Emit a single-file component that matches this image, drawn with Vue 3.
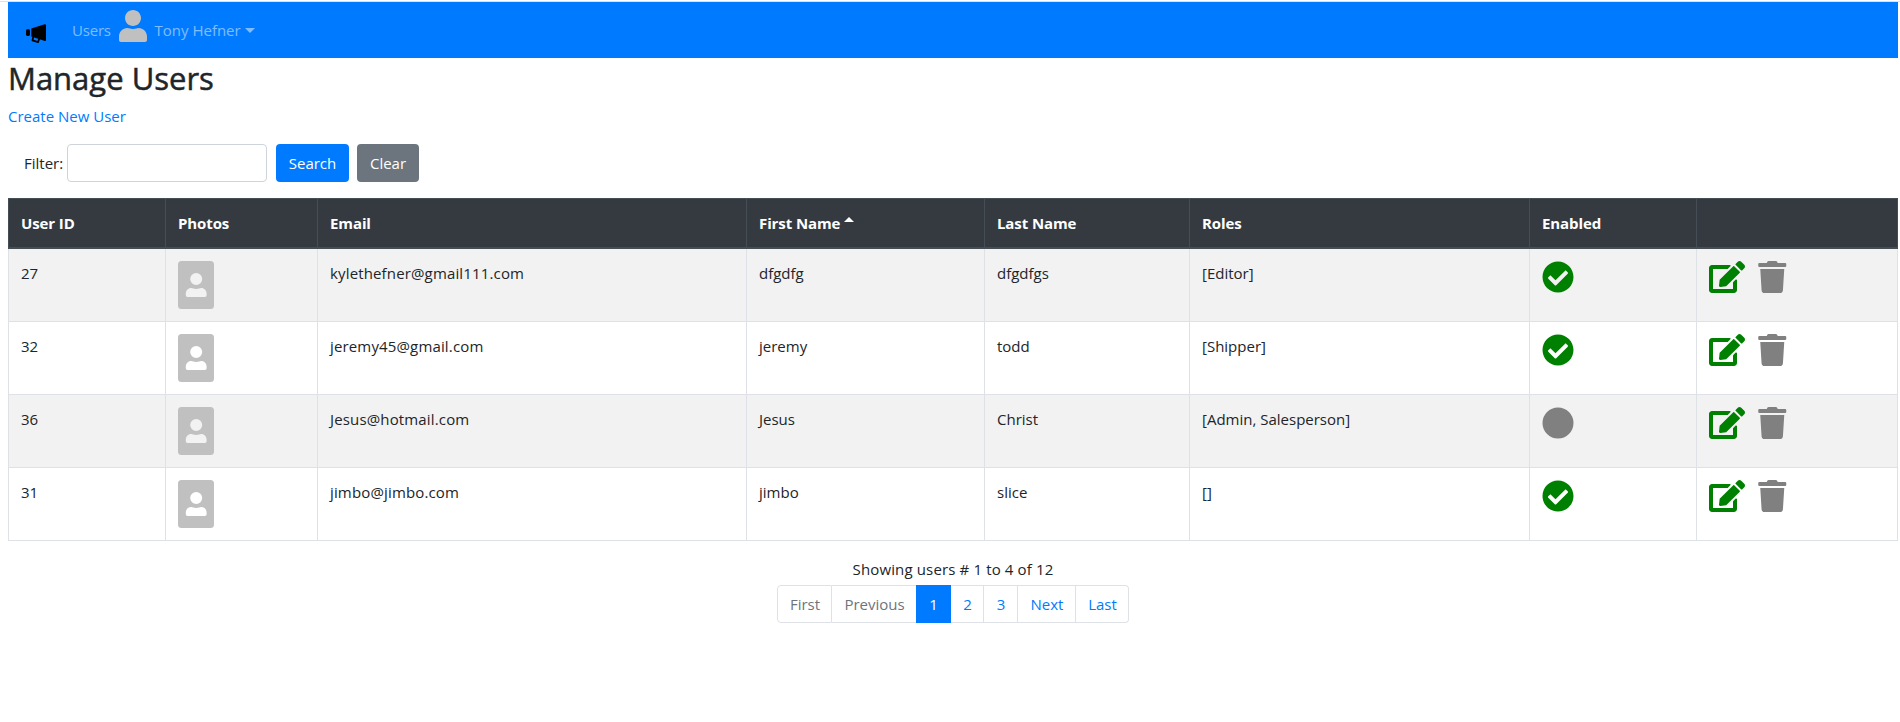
<script setup>
const columns = ['User ID', 'Photos', 'Email', 'First Name', 'Last Name', 'Roles', 'Enabled', '']
const users = [
  { id: 27, email: 'kylethefner@gmail111.com', first: 'dfgdfg', last: 'dfgdfgs', roles: '[Editor]', enabled: true },
  { id: 32, email: 'jeremy45@gmail.com', first: 'jeremy', last: 'todd', roles: '[Shipper]', enabled: true },
  { id: 36, email: 'Jesus@hotmail.com', first: 'Jesus', last: 'Christ', roles: '[Admin, Salesperson]', enabled: false },
  { id: 31, email: 'jimbo@jimbo.com', first: 'jimbo', last: 'slice', roles: '[]', enabled: true },
]
</script>

<template>
  <div class="page">
    <nav class="navbar">
      <svg class="brand" viewBox="0 0 20 20">
        <rect x="0" y="5.2" width="4" height="6.8" rx="1.4" />
        <path d="M5.3 4.4 L18.6 .2 Q20 0 20 1.2 V16 Q20 17.2 18.8 16.9 L5.3 12.6 Z" />
        <path class="handle" d="M7.2 13 L6.5 16.4 L12 18.2 L13.2 14.8" />
      </svg>
      <a class="nav-link users-link">Users</a>
      <svg class="avatar" viewBox="0 0 448 512">
        <path d="M224 256c70.700 0 128-57.300 128-128S294.700 0 224 0 96 57.300 96 128s57.300 128 128 128zm89.600 32c-28.700 0-42.500 16-89.600 16-47.100 0-60.800-16-89.600-16C60.200 288 0 348.200 0 422.400V480c0 18 14 32 32 32h384c18 0 32-14 32-32v-57.600c0-74.200-60.200-134.400-134.400-134.400z" />
      </svg>
      <a class="nav-link">Tony Hefner</a>
      <i class="caret"></i>
    </nav>

    <h2>Manage Users</h2>
    <a class="create">Create New User</a>

    <form class="filter" @submit.prevent>
      <label>Filter:</label>
      <input type="search" />
      <button class="btn search">Search</button>
      <button class="btn clear">Clear</button>
    </form>

    <table>
      <colgroup>
        <col v-for="n in 8" :key="n" :class="'c' + n" />
      </colgroup>
      <thead>
        <tr>
          <th v-for="c in columns" :key="c">{{ c }}<i v-if="c === 'First Name'" class="sort-up"></i></th>
        </tr>
      </thead>
      <tbody>
        <tr v-for="u in users" :key="u.id">
          <td>{{ u.id }}</td>
          <td>
            <svg class="portrait" viewBox="0 0 36 48">
              <path fill-rule="evenodd" d="M3.500 0H32.500Q36 0 36 3.500V44.500Q36 48 32.500 48H3.500Q0 48 0 44.500V3.500Q0 0 3.500 0Z M18.200 12A6 6 0 0 0 18.200 24A6 6 0 0 0 18.200 12Z M13.200 27C10 27 7.800 29.500 7.800 32.500V34.300Q7.800 36 9.500 36H26.900Q28.600 36 28.600 34.300V32.500C28.600 29.500 26.400 27 23.200 27C21.400 27 20.900 28 18.200 28S15 27 13.200 27Z" />
            </svg>
          </td>
          <td class="email">{{ u.email }}</td>
          <td>{{ u.first }}</td>
          <td>{{ u.last }}</td>
          <td>{{ u.roles }}</td>
          <td>
            <svg v-if="u.enabled" class="status on" viewBox="0 0 512 512">
              <path d="M504 256c0 136.967-111.033 248-248 248S8 392.967 8 256 119.033 8 256 8s248 111.033 248 248zM227.314 387.314l184-184c6.248-6.248 6.248-16.379 0-22.627l-22.627-22.627c-6.248-6.249-16.379-6.249-22.628 0L216 308.118l-70.059-70.059c-6.248-6.248-16.379-6.248-22.628 0l-22.627 22.627c-6.248 6.248-6.248 16.379 0 22.627l104 104c6.249 6.249 16.379 6.249 22.628.001z" />
            </svg>
            <svg v-else class="status off" viewBox="0 0 512 512"><circle cx="256" cy="256" r="248" /></svg>
          </td>
          <td>
            <div class="actions">
              <svg class="edit" viewBox="0 0 576 512">
                <path d="M402.600 83.200l90.200 90.200c3.800 3.800 3.800 10 0 13.800L274.400 405.600l-92.800 10.300c-12.400 1.400-22.900-9.100-21.500-21.500l10.300-92.800L388.800 83.200c3.800-3.800 10-3.800 13.800 0zm162-22.900l-48.800-48.800c-15.200-15.200-39.900-15.200-55.200 0l-35.400 35.400c-3.800 3.800-3.800 10 0 13.800l90.200 90.200c3.800 3.800 10 3.800 13.800 0l35.400-35.400c15.200-15.300 15.200-40 0-55.200zM384 346.200V448H64V128h229.800c3.200 0 6.200-1.300 8.500-3.500l40-40c7.600-7.600 2.200-20.500-8.500-20.500H48C21.500 64 0 85.500 0 112v352c0 26.500 21.500 48 48 48h352c26.500 0 48-21.500 48-48V306.200c0-10.700-12.900-16-20.500-8.500l-40 40c-2.200 2.300-3.500 5.300-3.500 8.500z" />
              </svg>
              <svg class="trash" viewBox="0 0 448 512">
                <path d="M432 32H312l-9.400-18.700A24 24 0 0 0 281.100 0H166.800a23.720 23.720 0 0 0-21.400 13.300L136 32H16A16 16 0 0 0 0 48v32a16 16 0 0 0 16 16h416a16 16 0 0 0 16-16V48a16 16 0 0 0-16-16zM32 128L53.200 467a48 48 0 0 0 47.900 45h245.800a48 48 0 0 0 47.900-45L416 128z" />
              </svg>
            </div>
          </td>
        </tr>
      </tbody>
    </table>

    <div class="summary"><span>Showing users # 1 to 4 of 12</span></div>
    <ul class="pagination">
      <li class="p-first muted">First</li>
      <li class="p-prev muted">Previous</li>
      <li class="active">1</li>
      <li class="p-2">2</li>
      <li class="p-3">3</li>
      <li class="p-next">Next</li>
      <li class="p-last">Last</li>
    </ul>
  </div>
</template>

<style>
body { margin: 0; background: #fff; }
</style>

<style scoped>
.page {
  box-sizing: border-box;
  min-height: 722px;
  padding: 1px 2px 0 8px;
  font-family: "Open Sans", "Noto Sans", sans-serif;
  font-size: 15px;
  line-height: 24px;
  color: #212529;
  background: linear-gradient(#dee2e6, #dee2e6) 0 1px / 100% 1px no-repeat;
}
svg { display: block; flex: none; }
.navbar {
  display: flex;
  height: 56px;
  margin-top: 1px;
  background: #007bff;
}
.brand { width: 20px; height: 20px; margin: 22px 0 0 18px; fill: #000; }
.handle { fill: none; stroke: #000; stroke-width: 1.800; stroke-linejoin: round; }
.nav-link { color: rgba(255, 255, 255, .5); margin-top: 16px; white-space: nowrap; }
.users-link { width: 46px; margin-left: 26px; letter-spacing: -.2px; }
.avatar { width: 28px; height: 32px; margin: 8px 8px 0 .500px; fill: silver; }
.caret { margin: 26px 0 0 4px; height: 0; border: 5px solid transparent; border-top-color: rgba(255, 255, 255, .5); border-bottom: 0; }
h2 { margin: 1px 0 0; font-size: 31px; font-weight: 500; line-height: 38px; white-space: nowrap; -webkit-text-stroke: .5px #212529; }
.create { display: block; width: max-content; margin: 7px 0 0; color: #007bff; }
.filter { display: flex; height: 38px; margin: 16px 0 16px 16px; }
.filter label { width: 43px; line-height: 38px; white-space: nowrap; }
.filter input { box-sizing: border-box; width: 200px; height: 38px; margin: 0 9px 0 0; padding: 6px 12px; border: 1px solid #ced4da; border-radius: 4px; }
.btn { height: 38px; padding: 0; border: 0; border-radius: 4px; color: #fff; font: inherit; }
.search { width: 73px; margin-right: 8px; background: #007bff; }
.clear { width: 62px; background: #6c757d; }
table { width: 1890px; table-layout: fixed; border-collapse: separate; border-spacing: 0; }
.c1 { width: 158px; }
.c2 { width: 152px; }
.c3 { width: 429px; }
.c4 { width: 238px; }
.c5 { width: 205px; }
.c6 { width: 340px; }
.c7 { width: 167px; }
.c8 { width: 201px; }
th, td { box-sizing: border-box; padding: 12px 12px 0; text-align: left; vertical-align: top; border: 0 solid #dee2e6; border-width: 0 1px 1px 0; white-space: nowrap; }
th { height: 51px; font-weight: 700; letter-spacing: -.1px; color: #fff; background: #343a40; border-color: #454d55; border-width: 1px 1px 2px 0; }
td { height: 73px; }
th:first-child, td:first-child { border-left-width: 1px; }
tbody tr:nth-child(odd) td { background: #f2f2f2; }
.email { letter-spacing: .15px; }
.sort-up { display: inline-block; margin-left: 4px; vertical-align: 7px; border: 5px solid transparent; border-bottom-color: #fff; border-top: 0; }
.portrait { width: 36px; height: 48px; fill: silver; }
.status { width: 32px; height: 32px; }
.on, .edit { fill: green; }
.off, .trash { fill: gray; }
.actions { display: flex; gap: 13px; }
.edit { width: 36px; height: 32px; }
.trash { width: 28.500px; height: 32px; }
.summary { margin-top: 16px; text-align: center; letter-spacing: .14px; }
.pagination { display: flex; justify-content: center; margin: 4px 0 0; padding: 0; list-style: none; color: #007bff; }
.pagination li { box-sizing: border-box; width: 34px; height: 38px; padding-left: 1px; line-height: 36px; text-align: center; border: 1px solid #dee2e6; border-left-width: 0; }
.pagination .p-first { width: 55px; border-left-width: 1px; border-radius: 4px 0 0 4px; }
.pagination .p-prev { width: 84px; border-right: 0; }
.pagination .active { width: 35px; color: #fff; background: #007bff; border-color: #007bff; }
.pagination .p-2 { width: 33px; }
.pagination .p-next { width: 58px; }
.pagination .p-last { width: 53px; border-radius: 0 4px 4px 0; }
.pagination .muted { color: #6c757d; }
</style>
